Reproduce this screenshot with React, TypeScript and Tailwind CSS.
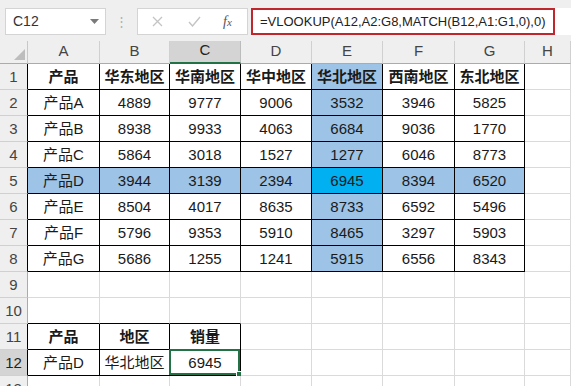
import React from "react";

const cols = ["A", "B", "C", "D", "E", "F", "G", "H"];
const data: string[][] = [
  ["产品", "华东地区", "华南地区", "华中地区", "华北地区", "西南地区", "东北地区", ""],
  ["产品A", "4889", "9777", "9006", "3532", "3946", "5825", ""],
  ["产品B", "8938", "9933", "4063", "6684", "9036", "1770", ""],
  ["产品C", "5864", "3018", "1527", "1277", "6046", "8773", ""],
  ["产品D", "3944", "3139", "2394", "6945", "8394", "6520", ""],
  ["产品E", "8504", "4017", "8635", "8733", "6592", "5496", ""],
  ["产品F", "5796", "9353", "5910", "8465", "3297", "5903", ""],
  ["产品G", "5686", "1255", "1241", "5915", "6556", "8343", ""],
  ["", "", "", "", "", "", "", ""],
  ["", "", "", "", "", "", "", ""],
  ["产品", "地区", "销量", "", "", "", "", ""],
  ["产品D", "华北地区", "6945", "", "", "", "", ""],
  ["", "", "", "", "", "", "", ""],
];

const isTable = (r: number, c: number) =>
  (r >= 1 && r <= 8 && c >= 1 && c <= 7) || (r >= 11 && r <= 12 && c >= 1 && c <= 3);

const font = { fontFamily: '"Liberation Sans", "Noto Sans CJK SC", sans-serif' };

function Cell({ r, c }: { r: number; c: number }) {
  const text = data[r - 1][c - 1];
  const right = isTable(r, c) || isTable(r, c + 1);
  const bottom = isTable(r, c) || isTable(r + 1, c);
  let bg = "bg-white";
  if (r === 5 && c === 5) bg = "bg-[#00b0f0]";
  else if ((c === 5 && r >= 1 && r <= 8) || (r === 5 && c >= 1 && c <= 7)) bg = "bg-[#9dc3e6]";
  const bold = r === 1 || r === 11;
  const selected = r === 12 && c === 3;
  return (
    <div
      className={`relative flex items-center justify-center border-r border-b text-[15px] text-[#1a1a1a] ${bg} ${
        right ? "border-r-black" : "border-r-[#dadada]"
      } ${bottom ? "border-b-black" : "border-b-[#dadada]"} ${bold ? "font-bold" : ""}`}
    >
      <span className="pt-[2px] whitespace-nowrap">{text}</span>
      {selected && (
        <div className="absolute -left-[1px] -top-[1px] right-0 bottom-0 border-2 border-[#217346]">
          <div className="absolute -right-[4px] -bottom-[4px] h-[6px] w-[6px] bg-[#217346] border border-white" />
        </div>
      )}
    </div>
  );
}

export default function App() {
  return (
    <div className="w-[571px] h-[386px] overflow-hidden bg-white" style={font}>
      {/* toolbar */}
      <div className="flex h-[41px] items-start bg-[#efefef] pt-[8px]">
        <div className="ml-[5px] flex h-[27px] w-[101px] items-center justify-between border border-[#d4d4d4] bg-white pl-[7px] pr-[6px] text-[14px] text-[#333]">
          <span>C12</span>
          <svg width="9" height="6" viewBox="0 0 9 6">
            <path d="M0 0 L9 0 L4.5 5 Z" fill="#7a7a7a" />
          </svg>
        </div>
        <div className="flex h-[27px] w-[31px] items-center justify-center text-[#b0b0b0] text-[13px]">⋮</div>
        <div className="flex h-[27px] w-[111px] items-center border border-[#d4d4d4] bg-white">
          <svg className="ml-[14px]" width="11" height="11" viewBox="0 0 11 11">
            <path d="M1 1 L10 10 M10 1 L1 10" stroke="#c4c4c4" strokeWidth="1.3" />
          </svg>
          <svg className="ml-[25px]" width="13" height="11" viewBox="0 0 13 11">
            <path d="M1 6 L4.5 10 L12 1" stroke="#c4c4c4" strokeWidth="1.4" fill="none" />
          </svg>
          <span
            className="ml-[22px] text-[14px] italic text-[#555]"
            style={{ fontFamily: '"Liberation Serif", serif' }}
          >
            f<span className="text-[11px]">x</span>
          </span>
        </div>
        <div className="ml-[3px] flex h-[27px] flex-1 items-center bg-white">
          <div className="flex h-[27px] w-[304px] items-center border-2 border-[#c0272d] pl-[7px] text-[13px] text-[#222] whitespace-nowrap">
            =VLOOKUP(A12,A2:G8,MATCH(B12,A1:G1,0),0)
          </div>
        </div>
      </div>
      {/* sheet */}
      <div className="grid grid-cols-[28px_72px_70px_71px_71px_71px_72px_70px_1fr] grid-rows-[23px_repeat(13,26px)] text-[#333]">
        {/* header row */}
        <div className="relative border-r border-b border-r-[#c8c8c8] border-b-[#ababab] bg-[#efefef]">
          <svg className="absolute right-[2px] bottom-[3px]" width="11" height="11" viewBox="0 0 11 11">
            <path d="M11 0 L11 11 L0 11 Z" fill="#bdbdbd" />
          </svg>
        </div>
        {cols.map((l, i) => {
          const c = i + 1;
          const sel = c === 3;
          return (
            <div
              key={l}
              className={`flex items-end justify-center pb-[1px] border-r text-[15px] ${
                sel
                  ? "bg-[#d4d4d4] border-b-2 border-b-[#217346] border-r-[#bcbcbc] text-[#222]"
                  : "bg-[#efefef] border-b border-b-[#ababab] border-r-[#d0d0d0] text-[#444]"
              }`}
            >
              {l}
            </div>
          );
        })}
        {data.map((_, ri) => {
          const r = ri + 1;
          const sel = r === 12;
          return (
            <React.Fragment key={r}>
              <div
                className={`flex items-end justify-center pb-[1px] border-r border-b text-[15px] border-b-[#d0d0d0] ${
                  sel ? "bg-[#d4d4d4] text-[#222]" : "bg-[#efefef] text-[#444]"
                } ${isTable(r, 1) ? "border-r-black" : "border-r-[#ababab]"}`}
              >
                {r}
              </div>
              {cols.map((_, ci) => (
                <Cell key={ci} r={r} c={ci + 1} />
              ))}
            </React.Fragment>
          );
        })}
      </div>
    </div>
  );
}
